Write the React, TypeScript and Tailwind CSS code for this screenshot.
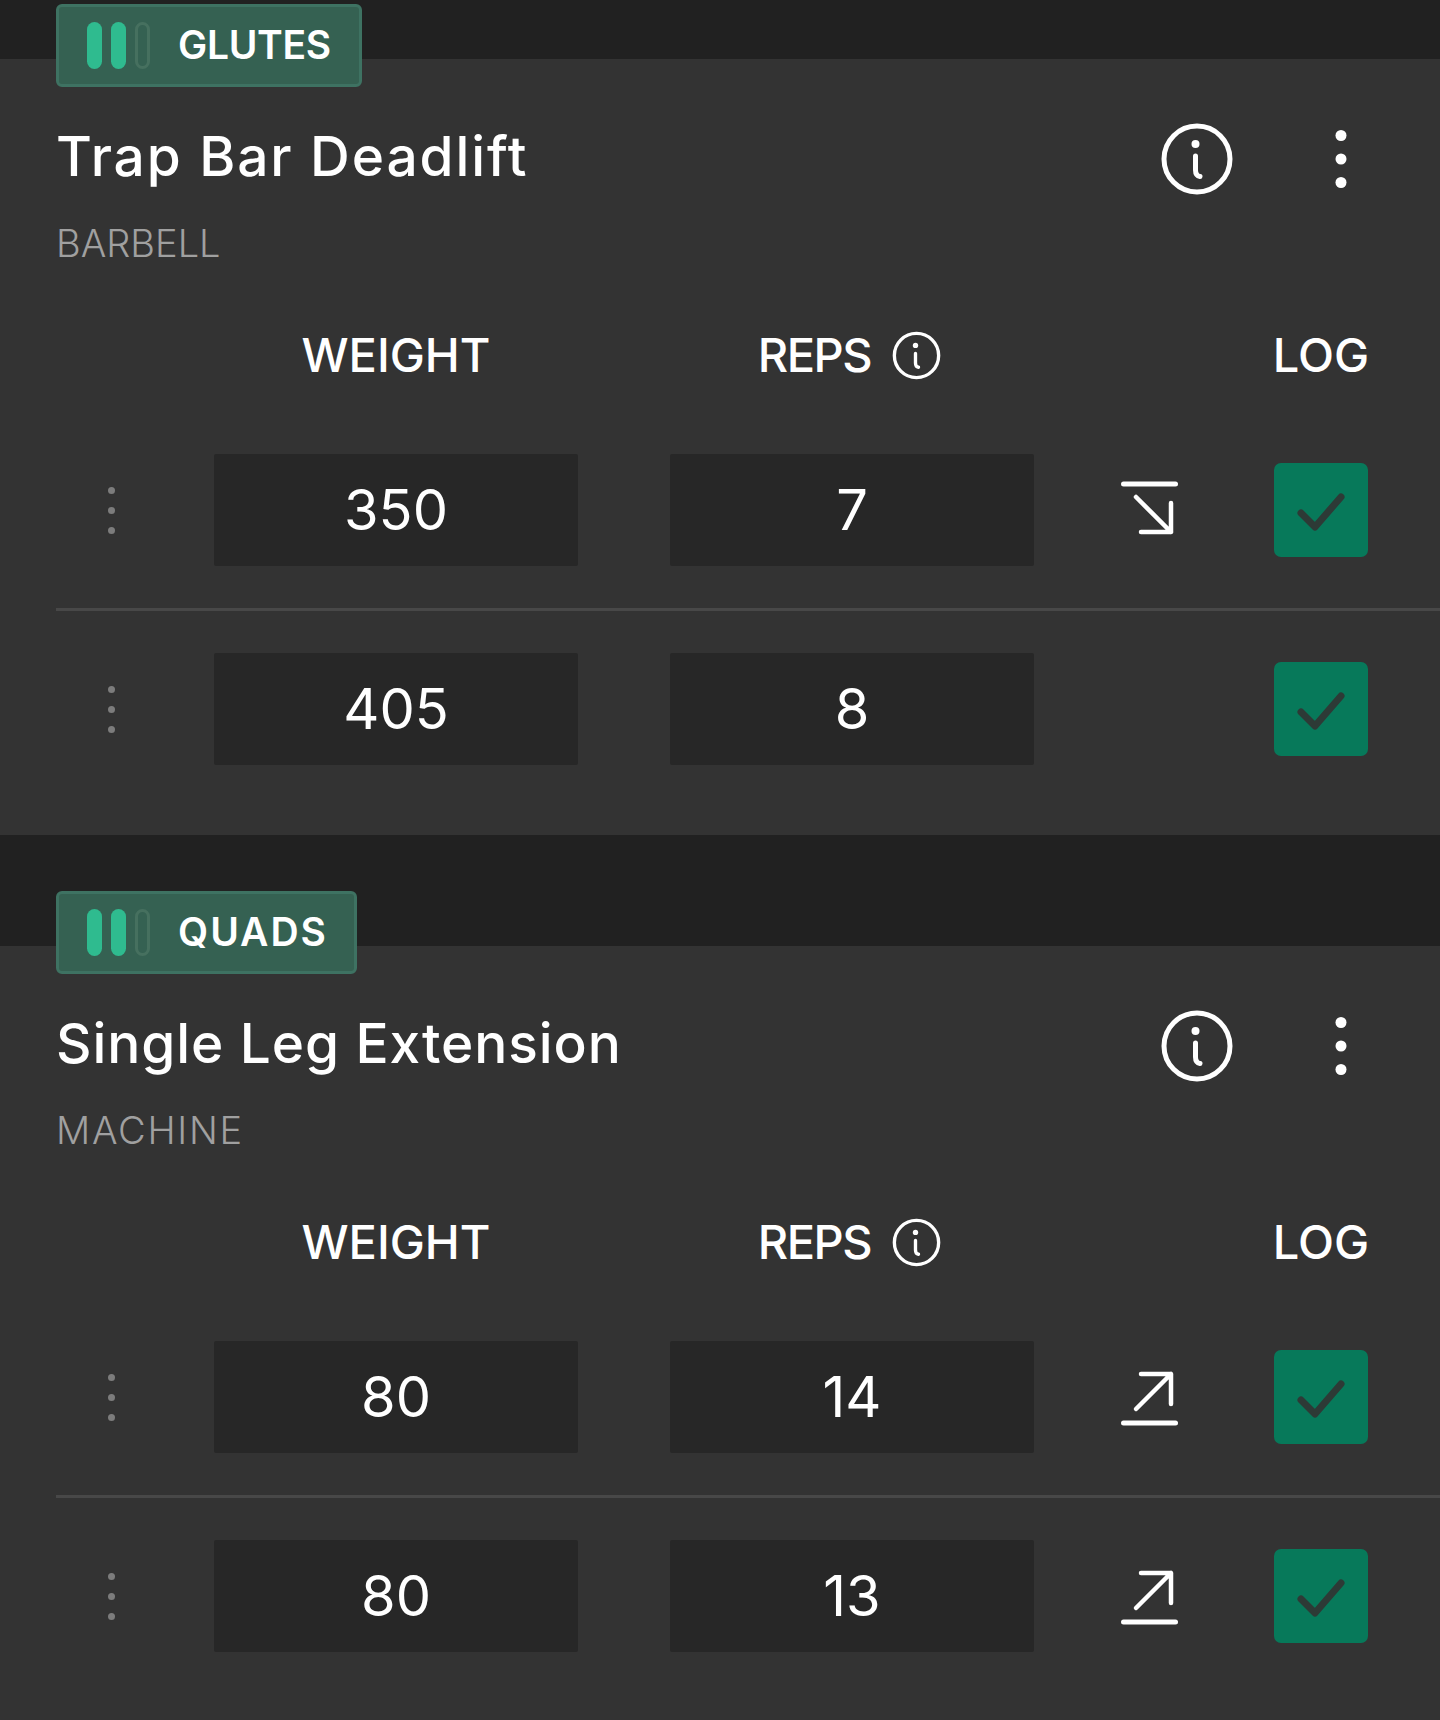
const font = "font-['Inter','Liberation_Sans',sans-serif]";

type SetRow = { weight: string; reps: string; trend?: "up" | "down" };

const InfoIcon = ({ className }: { className: string }) => (
  <svg viewBox="0 0 76 76" fill="none" stroke="#fff" className={className}>
    <circle cx="38" cy="38" r="33" strokeWidth="5" />
    <circle cx="36.5" cy="23" r="4" fill="#fff" stroke="none" />
    <path d="M36.5 35v14c0 4 1.5 6 4.5 6.5" strokeWidth="5" strokeLinecap="round" />
  </svg>
);

const Kebab = () => (
  <svg viewBox="0 0 12 60" className="w-3 h-[60px]" fill="#fff">
    <circle cx="6" cy="6.5" r="5.5" />
    <circle cx="6" cy="30" r="5.5" />
    <circle cx="6" cy="53.5" r="5.5" />
  </svg>
);

const DragDots = () => (
  <div className="w-[158px] pl-[52px]">
    <div className="flex flex-col gap-[13px]">
      <span className="block w-[7px] h-[7px] rounded-full bg-[#7c7c7c]" />
      <span className="block w-[7px] h-[7px] rounded-full bg-[#7c7c7c]" />
      <span className="block w-[7px] h-[7px] rounded-full bg-[#7c7c7c]" />
    </div>
  </div>
);

const TrendIcon = ({ trend }: { trend?: "up" | "down" }) => (
  <div className="w-[240px] flex justify-center pr-[7px]">
    <svg viewBox="0 0 60 60" className="w-[60px] h-[60px]" fill="none" stroke="#fff" strokeWidth="5" strokeLinecap="round" strokeLinejoin="round">
      {trend === "down" && (
        <>
          <path d="M2.5 4h52" />
          <path d="M15 17l35 35M50 23v29H20" strokeWidth="4.5" />
        </>
      )}
      {trend === "up" && (
        <>
          <path d="M2.5 56h52" />
          <path d="M15 42L50 7M20 7h30v30" strokeWidth="4.5" />
        </>
      )}
    </svg>
  </div>
);

const Cell = ({ value }: { value: string }) => (
  <div className="w-[364px] h-[112px] bg-[#272727] rounded-[2px] flex items-center justify-center text-[56px] text-white font-normal">
    {value}
  </div>
);

const Row = ({ row }: { row: SetRow }) => (
  <div className="flex items-center h-[112px]">
    <DragDots />
    <Cell value={row.weight} />
    <div className="w-[92px]" />
    <Cell value={row.reps} />
    <TrendIcon trend={row.trend} />
    <div className="w-[94px] h-[94px] bg-[#07795a] rounded-[7px] flex items-center justify-center">
      <svg viewBox="0 0 50 44" className="w-[50px] h-[44px]" fill="none" stroke="#2d3a36" strokeWidth="7" strokeLinecap="round" strokeLinejoin="round">
        <path d="M5 25l14 14L45 9" />
      </svg>
    </div>
  </div>
);

const Exercise = ({
  muscle,
  badgeClass,
  title,
  titleClass,
  equipment,
  equipmentClass,
  rows,
}: {
  muscle: string;
  badgeClass: string;
  title: string;
  titleClass: string;
  equipment: string;
  equipmentClass: string;
  rows: SetRow[];
}) => (
  <section className="flow-root bg-[#333333] pl-[56px]">
    <div className={`${badgeClass} -mt-[55px] h-[83px] bg-[#356152] border-[3px] border-[#3e7262] rounded-[6px] flex items-center pl-[28px] gap-[9px]`}>
      <span className="block w-[15px] h-[47px] rounded-full bg-[#2fbb8f]" />
      <span className="block w-[15px] h-[47px] rounded-full bg-[#2fbb8f]" />
      <span className="block w-[15px] h-[47px] rounded-full border-[3px] border-[#46705f]" />
      <span className="ml-[19px] text-[39px] font-semibold text-white">{muscle}</span>
    </div>

    <div className="flex items-center h-[80px] mt-[32px]">
      <h2 className={`${titleClass} text-[55px] font-medium text-white pb-[6px]`}>{title}</h2>
      <div className="ml-auto flex items-center">
        <InfoIcon className="w-[76px] h-[76px]" />
        <div className="ml-[100px] mr-[93px]">
          <Kebab />
        </div>
      </div>
    </div>

    <p className={`${equipmentClass} text-[38px] font-light text-[#a0a0a0] leading-[48px] mt-[20px]`}>{equipment}</p>

    <div className="flex items-center h-[60px] mt-[58px] text-[47px] font-medium text-white">
      <div className="w-[158px]" />
      <div className="w-[364px] text-center">WEIGHT</div>
      <div className="w-[92px]" />
      <div className="w-[364px] flex items-center justify-center gap-[20px] pr-[4px]">
        <span className="tracking-[-1.5px]">REPS</span>
        <InfoIcon className="w-[51px] h-[51px]" />
      </div>
      <div className="w-[240px]" />
      <div className="w-[94px] flex justify-center">LOG</div>
    </div>

    <div className="mt-[69px]">
      <Row row={rows[0]} />
      <div className="h-[3px] bg-[#484848] mt-[42px] mb-[42px]" />
      <Row row={rows[1]} />
    </div>
    <div className="h-[70px]" />
  </section>
);

export default function App() {
  return (
    <div className={`${font} bg-[#212121] h-[1720px] overflow-hidden pt-[59px]`}>
      <Exercise
        muscle="GLUTES"
        badgeClass="w-[306px] tracking-[-0.3px]"
        title="Trap Bar Deadlift"
        titleClass="tracking-[1.9px]"
        equipment="BARBELL"
        equipmentClass="tracking-[0px]"
        rows={[
          { weight: "350", reps: "7", trend: "down" },
          { weight: "405", reps: "8" },
        ]}
      />
      <div className="h-[111px]" />
      <Exercise
        muscle="QUADS"
        badgeClass="w-[301px] tracking-[2px]"
        title="Single Leg Extension"
        titleClass="tracking-[0.9px]"
        equipment="MACHINE"
        equipmentClass="tracking-[1.7px]"
        rows={[
          { weight: "80", reps: "14", trend: "up" },
          { weight: "80", reps: "13", trend: "up" },
        ]}
      />
    </div>
  );
}
